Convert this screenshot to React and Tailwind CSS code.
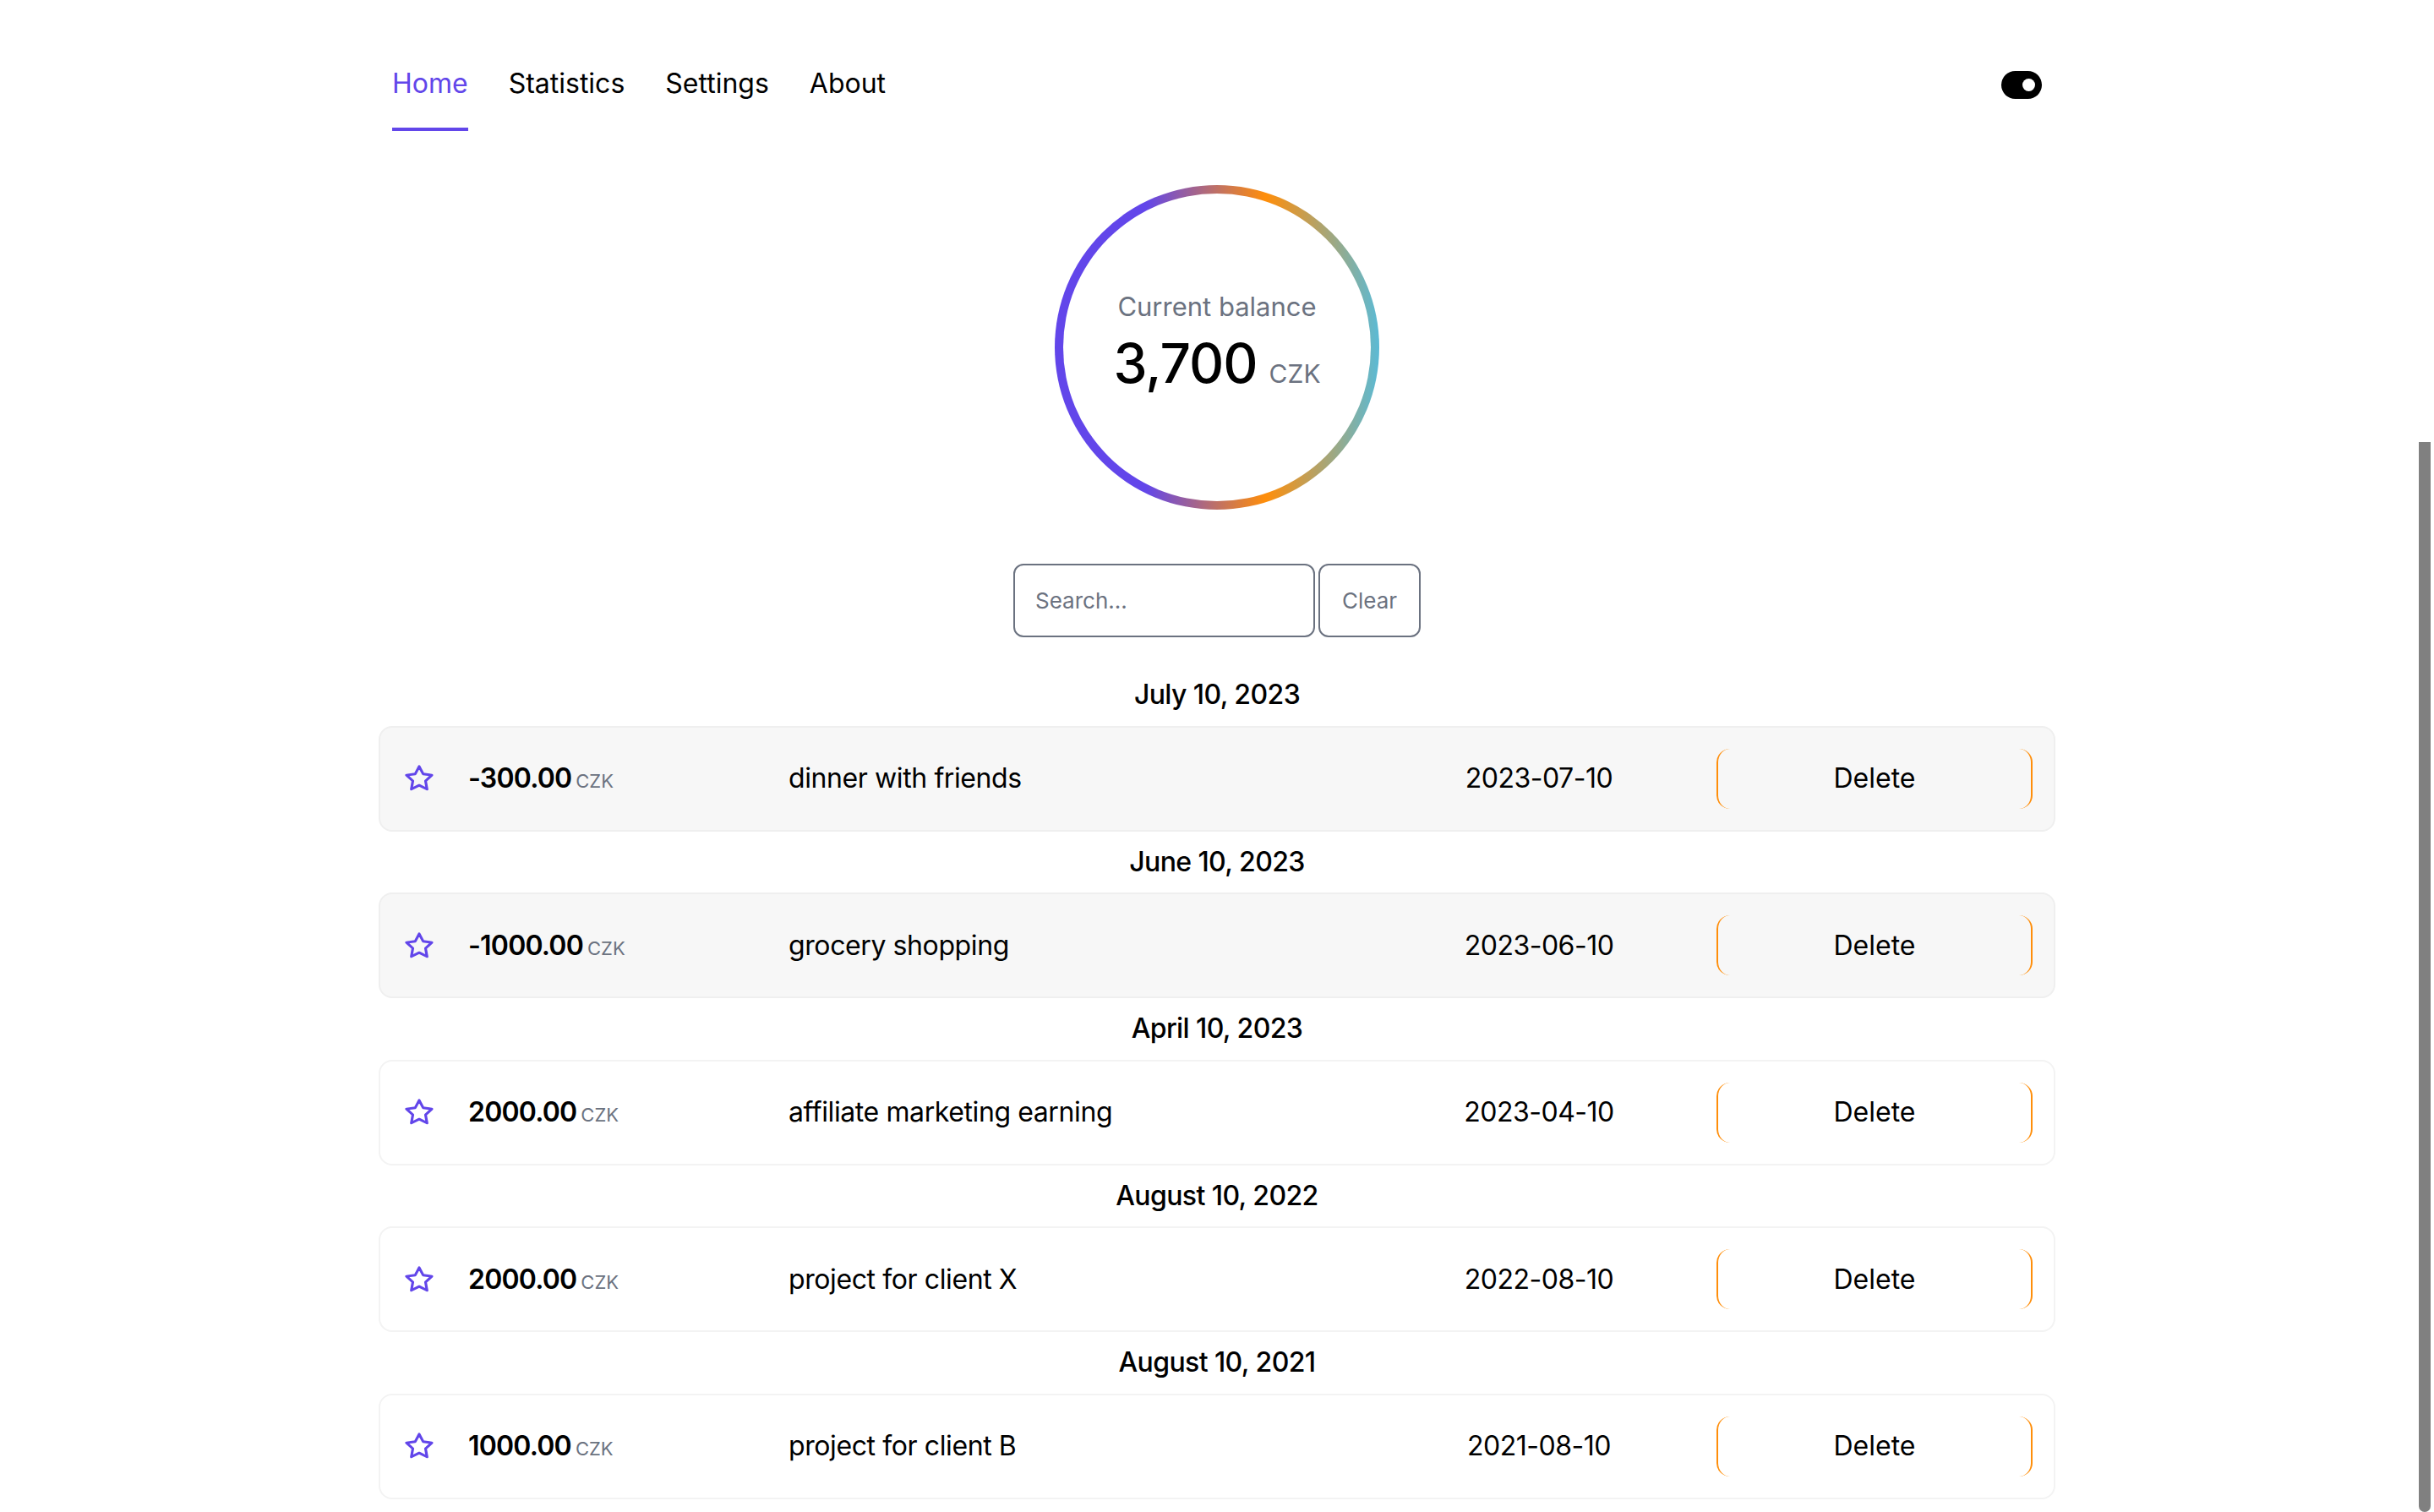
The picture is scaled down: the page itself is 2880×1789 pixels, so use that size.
import React from "react";

const rows = [
  { heading: "July 10, 2023", amount: "-300.00", desc: "dinner with friends", date: "2023-07-10", gray: true },
  { heading: "June 10, 2023", amount: "-1000.00", desc: "grocery shopping", date: "2023-06-10", gray: true },
  { heading: "April 10, 2023", amount: "2000.00", desc: "affiliate marketing earning", date: "2023-04-10", gray: false },
  { heading: "August 10, 2022", amount: "2000.00", desc: "project for client X", date: "2022-08-10", gray: false },
  { heading: "August 10, 2021", amount: "1000.00", desc: "project for client B", date: "2021-08-10", gray: false },
];

function Star() {
  return (
    <svg width="36" height="34" viewBox="0 0 24 24" preserveAspectRatio="none" fill="none" stroke="#6246ea" strokeWidth="2.1" strokeLinejoin="round" strokeLinecap="round">
      <polygon points="12,2 15.09,8.26 22,9.27 17,14.14 18.18,21.02 12,17.77 5.82,21.02 7,14.14 2,9.27 8.91,8.26" />
    </svg>
  );
}

function Row({ r }) {
  return (
    <div>
      <div className="h-[72.5px] flex items-center justify-center text-[32px] font-medium tracking-[-0.6px] text-black">
        {r.heading}
      </div>
      <div
        className={
          "h-[125px] flex items-center rounded-[16px] border-2 " +
          (r.gray ? "bg-[#f7f7f7] border-[#efefef]" : "bg-white border-[#f3f3f3]")
        }
      >
        <div className="ml-[28px] w-[36px] flex items-center">
          <Star />
        </div>
        <div className="ml-[40px] w-[379px] flex items-baseline">
          <span className="text-[32px] font-semibold tracking-[-0.8px] text-black">{r.amount}</span>
          <span className="ml-[5px] text-[22px] text-[#6b7280]">CZK</span>
        </div>
        <div className="flex-1 text-[32px] tracking-[-0.4px] text-black">{r.desc}</div>
        <div className="w-[250px] text-center text-[32px] tracking-[-0.5px] text-black">{r.date}</div>
        <button className="ml-[85px] mr-[25px] w-[374px] h-[71px] rounded-[16px] border-x-2 border-[#ff8e0a] text-[32px] text-black bg-transparent">
          Delete
        </button>
      </div>
    </div>
  );
}

export default function App() {
  return (
    <div className="h-screen overflow-hidden bg-white font-['Inter',sans-serif] relative">
      <div className="w-[1984px] mx-auto">
        <header className="pt-[75px] px-[16px] flex justify-between items-start">
          <nav className="flex gap-[48px]">
            <a className="text-[32px] leading-[48px] pb-[28px] border-b-4 border-[#6246ea] text-[#6246ea]">Home</a>
            <a className="text-[32px] leading-[48px] pb-[28px] border-b-4 border-transparent text-black">Statistics</a>
            <a className="text-[32px] leading-[48px] pb-[28px] border-b-4 border-transparent text-black">Settings</a>
            <a className="text-[32px] leading-[48px] pb-[28px] border-b-4 border-transparent text-black">About</a>
          </nav>
          <div className="mt-[9px] w-[48px] h-[33px] rounded-full bg-black flex items-center justify-end pr-[8px]">
            <div className="w-[15px] h-[15px] rounded-full bg-white" />
          </div>
        </header>

        <div className="mt-[64px] flex justify-center">
          <div className="w-[384px] h-[384px] rounded-full p-[10px] bg-[linear-gradient(90deg,#6246ea_28%,#ff8e0a_65%,#5bbad5_100%)]">
            <div className="w-full h-full rounded-full bg-white flex flex-col items-center justify-center pb-[12px]">
              <div className="text-[31px] leading-[40px] text-[#6b7280]">Current balance</div>
              <div className="mt-[9px] flex items-baseline gap-[14px]">
                <span className="text-[64px] leading-[76px] font-medium tracking-[-1px] text-black">3,700</span>
                <span className="text-[30px] text-[#6b7280]">CZK</span>
              </div>
            </div>
          </div>
        </div>

        <div className="mt-[64px] flex justify-center gap-[4px]">
          <input
            placeholder="Search..."
            className="w-[357px] h-[87px] border-2 border-[#6b7280] rounded-[12px] pl-[24px] text-[26px] placeholder:text-[#6b7280] outline-none"
          />
          <button className="w-[121px] h-[87px] border-2 border-[#6b7280] rounded-[12px] text-[26px] text-[#6b7280] bg-white">
            Clear
          </button>
        </div>

        <div className="mt-[32px]">
          {rows.map((r, i) => (
            <Row key={i} r={r} />
          ))}
        </div>
      </div>
      <div className="absolute top-[523px] right-[4px] bottom-0 w-[14px] bg-[#808080] rounded-b-full" />
    </div>
  );
}
